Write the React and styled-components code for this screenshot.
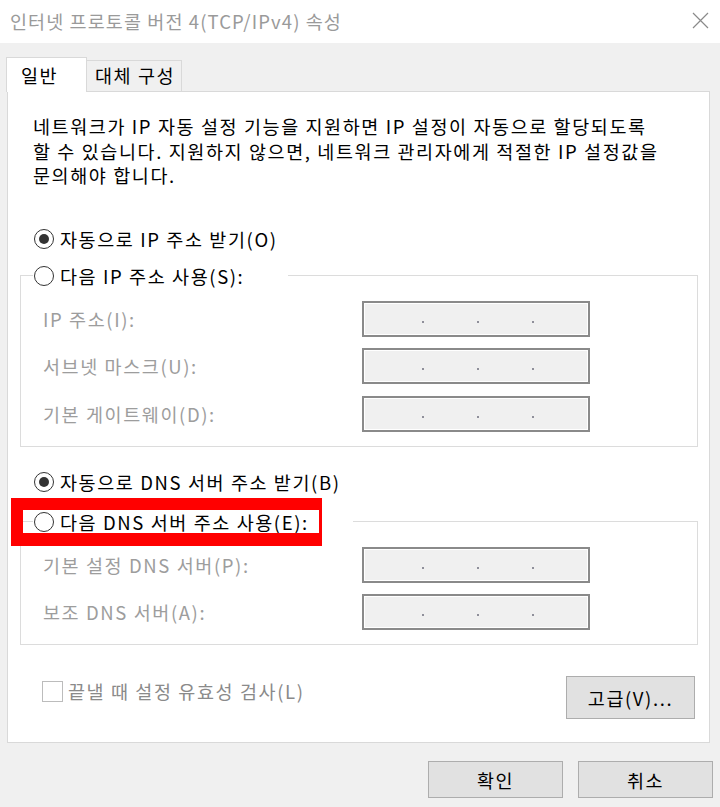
import React from 'react';
import styled, { createGlobalStyle } from 'styled-components';

const GlobalStyle = createGlobalStyle`
  html, body {
    margin: 0;
    padding: 0;
    background: #f0f0f0;
  }
  body {
    font-family: "Noto Sans CJK KR", "Noto Sans", sans-serif;
    font-size: 18.5px;
    letter-spacing: 1.6px;
    color: #000;
  }
`;

const ipRows = [
  { label: 'IP 주소(I):' },
  { label: '서브넷 마스크(U):' },
  { label: '기본 게이트웨이(D):' },
];

const dnsRows = [
  { label: '기본 설정 DNS 서버(P):' },
  { label: '보조 DNS 서버(A):' },
];

const App = () => {
  return (
    <>
      <GlobalStyle />
      <Window>
        <TitleBar>
          <Title>인터넷 프로토콜 버전 4(TCP/IPv4) 속성</Title>
          <CloseButton aria-label="닫기">
            <svg width="17" height="17" viewBox="0 0 17 17">
              <path d="M1 1 L16 16 M16 1 L1 16" stroke="#8a8a8a" strokeWidth="1.2" fill="none" />
            </svg>
          </CloseButton>
        </TitleBar>

        <TabStrip>
          <Tab $active>일반</Tab>
          <Tab>대체 구성</Tab>
        </TabStrip>

        <Panel>
          <Description>
            네트워크가 IP 자동 설정 기능을 지원하면 IP 설정이 자동으로 할당되도록
            <br />
            할 수 있습니다. 지원하지 않으면, 네트워크 관리자에게 적절한 IP 설정값을
            <br />
            문의해야 합니다.
          </Description>

          <RadioRow $top={38}>
            <RadioCircle $checked />
            자동으로 IP 주소 받기(O)
          </RadioRow>

          <Group $top={11}>
            <Legend $width={255}>
              <RadioRow as="span">
                <RadioCircle />
                다음 IP 주소 사용(S):
              </RadioRow>
            </Legend>
            {ipRows.map((row) => (
              <FieldRow key={row.label}>
                <FieldLabel>{row.label}</FieldLabel>
                <IpField />
              </FieldRow>
            ))}
          </Group>

          <RadioRow $top={22}>
            <RadioCircle $checked />
            자동으로 DNS 서버 주소 받기(B)
          </RadioRow>

          <Group $top={14}>
            <Legend $width={320}>
              <RadioRow as="span">
                <RadioCircle />
                다음 DNS 서버 주소 사용(E):
              </RadioRow>
              <Highlight />
            </Legend>
            {dnsRows.map((row) => (
              <FieldRow key={row.label}>
                <FieldLabel>{row.label}</FieldLabel>
                <IpField />
              </FieldRow>
            ))}
          </Group>

          <BottomRow>
            <CheckRow>
              <CheckBox />
              끝낼 때 설정 유효성 검사(L)
            </CheckRow>
            <Button $w={129} $h={43}>고급(V)...</Button>
          </BottomRow>
        </Panel>

        <Footer>
          <Button $w={135} $h={37}>확인</Button>
          <Button $w={135} $h={37}>취소</Button>
        </Footer>
      </Window>
    </>
  );
};

// four octets separated by the three dots of the address control
const IpField = () => (
  <IpBox>
    <IpDot />
    <IpDot />
    <IpDot />
  </IpBox>
);

export default App;

const Window = styled.div`
  width: 720px;
  height: 807px;
  display: flex;
  flex-direction: column;
  background: #f0f0f0;
  overflow: hidden;
`;

const TitleBar = styled.div`
  height: 43px;
  flex: none;
  background: #fff;
  display: flex;
  align-items: center;
  justify-content: space-between;
  padding: 0 11px 2px 10px;
  box-sizing: border-box;
`;

const Title = styled.div`
  color: #9a9a9a;
  font-size: 18.5px;
  letter-spacing: 1.1px;
  line-height: 24px;
  white-space: nowrap;
`;

const CloseButton = styled.div`
  width: 17px;
  height: 17px;
  display: flex;
`;

const TabStrip = styled.div`
  display: flex;
  align-items: flex-end;
  height: 34px;
  margin: 14px 0 0 6px;
  position: relative;
  z-index: 1;
`;

const Tab = styled.div`
  box-sizing: border-box;
  width: ${({ $active }) => ($active ? '81px' : '96px')};
  height: ${({ $active }) => ($active ? '35px' : '31px')};
  margin-bottom: ${({ $active }) => ($active ? '-1px' : '0')};
  margin-left: ${({ $active }) => ($active ? '0' : '-1px')};
  padding: ${({ $active }) => ($active ? '3px 0 0 14px' : '0 0 0 8px')};
  background: ${({ $active }) => ($active ? '#fff' : '#f0f0f0')};
  border: 1px solid #d9d9d9;
  border-bottom: none;
  line-height: 28px;
  white-space: nowrap;
  position: relative;
  z-index: ${({ $active }) => ($active ? 2 : 1)};
`;

const Panel = styled.div`
  box-sizing: border-box;
  width: 703px;
  height: 652px;
  margin-left: 7px;
  padding: 22px 11px 0 12px;
  background: #fff;
  border: 1px solid #d9d9d9;
  display: flex;
  flex-direction: column;
  flex: none;
`;

const Description = styled.div`
  margin-left: 13px;
  line-height: 24.5px;
  white-space: nowrap;
`;

const RadioRow = styled.div`
  display: flex;
  align-items: center;
  gap: 6px;
  height: 26px;
  margin: ${({ $top }) => ($top ? `${$top}px 0 0 14px` : '0')};
  line-height: 26px;
  white-space: nowrap;
  color: #000;
`;

const RadioCircle = styled.span`
  box-sizing: border-box;
  width: 20px;
  height: 20px;
  flex: none;
  border: 1.5px solid #333;
  border-radius: 50%;
  background: #fff;
  display: flex;
  align-items: center;
  justify-content: center;

  &::after {
    content: '';
    display: ${({ $checked }) => ($checked ? 'block' : 'none')};
    width: 10px;
    height: 10px;
    border-radius: 50%;
    background: #333;
  }
`;

const Group = styled.fieldset`
  margin: ${({ $top }) => $top}px 0 0 0;
  padding: 11px 0 14px 22px;
  border: 1px solid #dcdcdc;
  width: 678px;
  box-sizing: border-box;
  display: flex;
  flex-direction: column;
  gap: 11.5px;
`;

const Legend = styled.legend`
  position: relative;
  box-sizing: border-box;
  width: ${({ $width }) => $width}px;
  margin-left: -10px;
  padding: 0 0 0 1px;
  background: #fff;
  margin-bottom: 1px;
`;

// red marker drawn over the second radio of the DNS group
const Highlight = styled.span`
  position: absolute;
  left: -22px;
  top: -11px;
  width: 311px;
  height: 48px;
  box-sizing: border-box;
  border-style: solid;
  border-color: #ff0000;
  border-width: 12px 3px 13px 12px;
  pointer-events: none;
`;

const FieldRow = styled.div`
  display: grid;
  grid-template-columns: 319px 228px;
  align-items: center;
  height: 36px;
  flex: none;
`;

const FieldLabel = styled.span`
  color: #9d9d9d;
  line-height: 24px;
  white-space: nowrap;
`;

const IpBox = styled.div`
  box-sizing: border-box;
  width: 228px;
  height: 36px;
  border: 2px solid #8a8a8a;
  box-shadow: inset 0 0 0 1px #fff;
  background: #f0f0f0;
  display: flex;
  align-items: flex-end;
  gap: 53px;
  padding: 0 0 12px 58px;
`;

const IpDot = styled.span`
  width: 2px;
  height: 2px;
  background: #8f8f9a;
`;

const BottomRow = styled.div`
  display: flex;
  justify-content: space-between;
  align-items: flex-start;
  margin: 31px 3px 0 0;
`;

const CheckRow = styled.div`
  display: flex;
  align-items: center;
  gap: 5px;
  margin: 4px 0 0 22px;
  height: 22px;
  color: #8a8a8a;
  line-height: 22px;
  white-space: nowrap;
`;

const CheckBox = styled.span`
  box-sizing: border-box;
  width: 21px;
  height: 21px;
  border: 1px solid #bcbcbc;
  background: #fff;
  flex: none;
`;

const Button = styled.button`
  box-sizing: border-box;
  width: ${({ $w }) => $w}px;
  height: ${({ $h }) => $h}px;
  background: #e1e1e1;
  border: 1px solid #adadad;
  border-radius: 0;
  font-family: "Noto Sans CJK KR", "Noto Sans", sans-serif;
  font-size: 18.5px;
  letter-spacing: 1.6px;
  color: #000;
  padding: 0;
  cursor: pointer;
`;

const Footer = styled.div`
  display: flex;
  justify-content: flex-end;
  gap: 15px;
  padding: 18px 7px 0 0;
`;
